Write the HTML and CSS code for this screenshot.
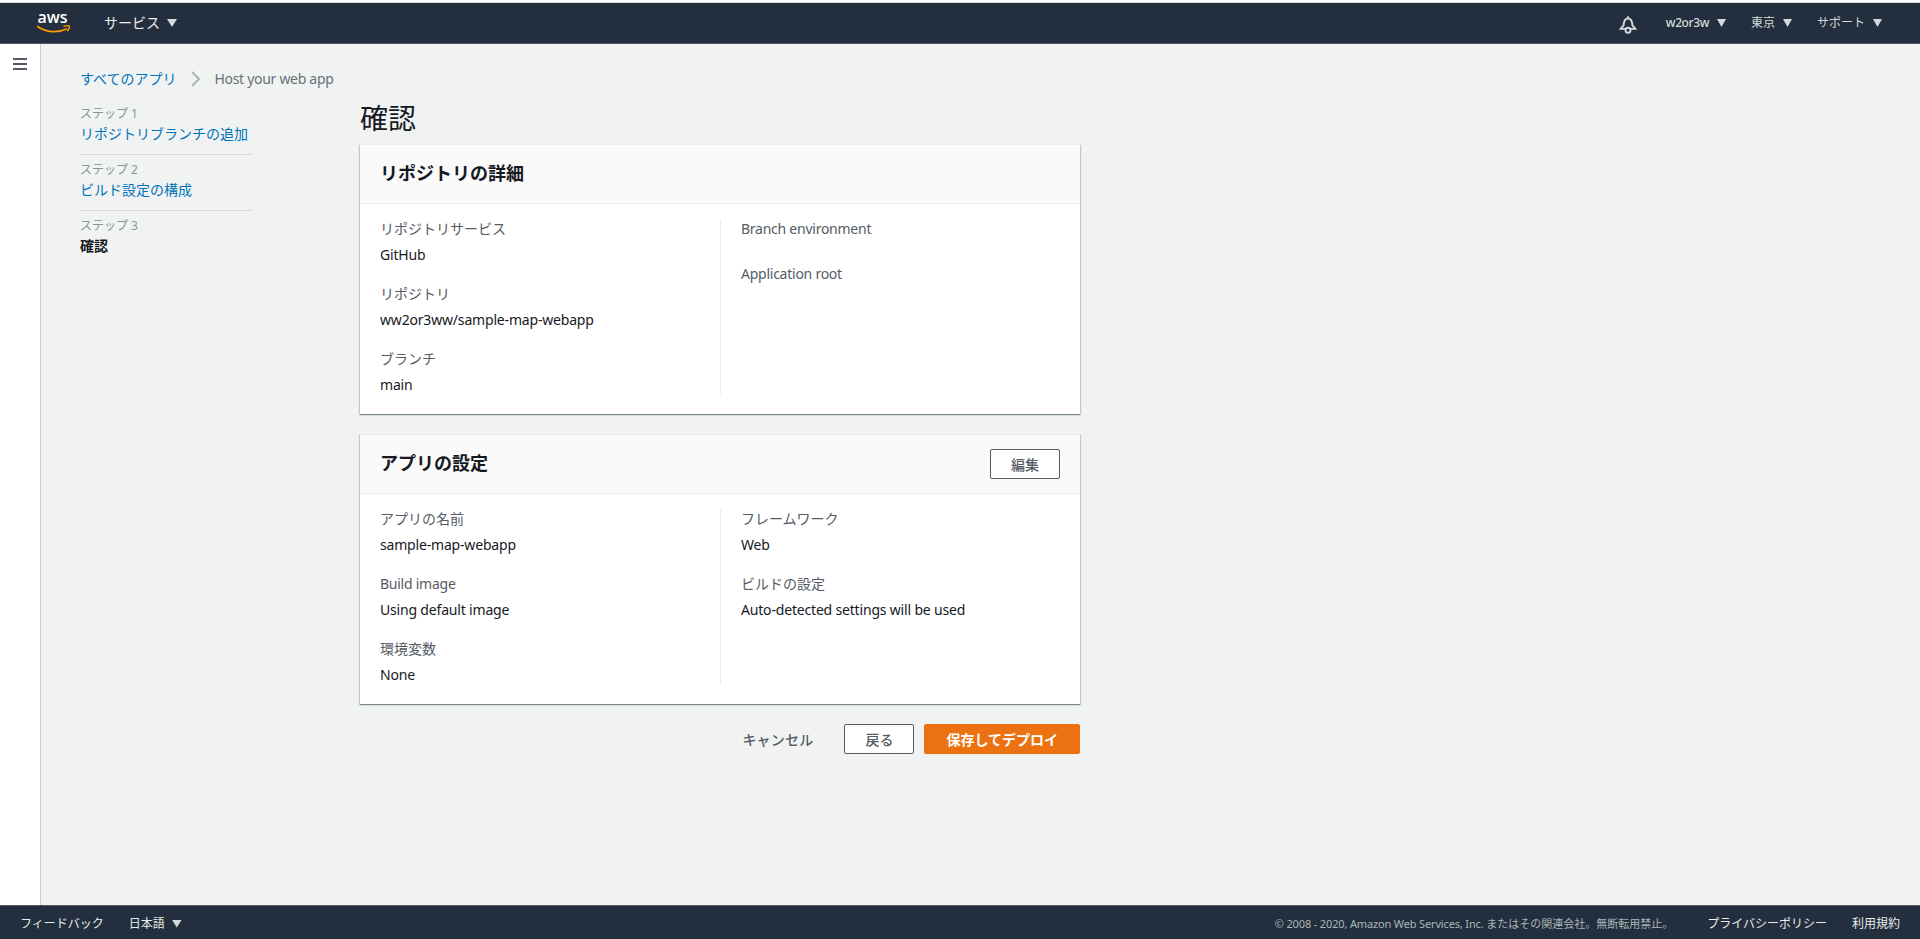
FILE: index.html
```html
<!DOCTYPE html>
<html lang="ja">

<head>
    <meta charset="UTF-8">
    <title>AWS Amplify Console</title>
    <link rel="stylesheet" href="styles.css">
</head>

<body>
    <header class="topbar">
        <svg class="logo" width="34" height="26" viewBox="0 0 34 26">
            <text x="0.5" y="13" textLength="30" lengthAdjust="spacingAndGlyphs">aws</text>
            <path d="M0.3 16.3 C9 22.8 21 23.2 30 18.8" fill="none" stroke="#ff9900" stroke-width="1.8" />
            <path d="M26.5 16.4 C29 15.4 31 15.4 32.4 16 C32.6 17.9 31.6 19.9 30.3 21.2" fill="none" stroke="#ff9900" stroke-width="1.4" />
        </svg>
        <a class="menu services">サービス<i class="arrow big"></i></a>
        <div class="account">
            <svg class="bell" width="18" height="18" viewBox="0 0 18 18" fill="none" stroke="#d5dbdb" stroke-width="1.9">
                <path d="M9 0.3V2.5M1.6 12.9H16.4L13.4 9.3C13.2 5.4 11.6 2.5 9 2.5S4.8 5.4 4.6 9.3Z" />
                <circle cx="9" cy="14.3" r="2.5" fill="#232f3e" />
            </svg>
            <a class="menu"><span class="user">w2or3w</span><i class="arrow"></i></a>
            <a class="menu">東京<i class="arrow"></i></a>
            <a class="menu">サポート<i class="arrow"></i></a>
        </div>
    </header>

    <div class="page">
        <nav class="sidebar">
            <div class="hamburger"><i></i><i></i><i></i></div>
        </nav>

        <main class="content">
            <div class="breadcrumb">
                <a class="link">すべてのアプリ</a>
                <svg width="10" height="16" viewBox="0 0 10 16" fill="none" stroke="#aab7b8" stroke-width="2">
                    <path d="M1 1L8 8L1 15" />
                </svg>
                <span class="current">Host your web app</span>
            </div>

            <div class="wizard">
                <ul class="steps">
                    <li>
                        <small>ステップ 1</small>
                        <a class="link">リポジトリブランチの追加</a>
                    </li>
                    <li>
                        <small>ステップ 2</small>
                        <a class="link">ビルド設定の構成</a>
                    </li>
                    <li>
                        <small>ステップ 3</small>
                        <b>確認</b>
                    </li>
                </ul>

                <div class="review">
                    <h1>確認</h1>

                    <section class="card">
                        <div class="card-header">
                            <h2>リポジトリの詳細</h2>
                        </div>
                        <div class="card-body">
                            <dl>
                                <dt>リポジトリサービス</dt>
                                <dd>GitHub</dd>
                                <dt>リポジトリ</dt>
                                <dd>ww2or3ww/sample-map-webapp</dd>
                                <dt>ブランチ</dt>
                                <dd>main</dd>
                            </dl>
                            <dl>
                                <dt class="latin">Branch environment</dt>
                                <dd></dd>
                                <dt class="latin">Application root</dt>
                                <dd></dd>
                            </dl>
                        </div>
                    </section>

                    <section class="card">
                        <div class="card-header">
                            <h2>アプリの設定</h2>
                            <button class="btn">編集</button>
                        </div>
                        <div class="card-body">
                            <dl>
                                <dt>アプリの名前</dt>
                                <dd>sample-map-webapp</dd>
                                <dt class="latin">Build image</dt>
                                <dd>Using default image</dd>
                                <dt>環境変数</dt>
                                <dd>None</dd>
                            </dl>
                            <dl>
                                <dt>フレームワーク</dt>
                                <dd>Web</dd>
                                <dt>ビルドの設定</dt>
                                <dd>Auto-detected settings will be used</dd>
                            </dl>
                        </div>
                    </section>

                    <div class="actions">
                        <button class="btn btn-link">キャンセル</button>
                        <button class="btn">戻る</button>
                        <button class="btn btn-primary">保存してデプロイ</button>
                    </div>
                </div>
            </div>
        </main>
    </div>

    <footer class="footer">
        <a>フィードバック</a>
        <a class="menu">日本語<i class="arrow big"></i></a>
        <span class="copyright"><span class="company">© 2008 - 2020, Amazon Web Services, Inc. </span>またはその関連会社。無断転用禁止。</span>
        <a>プライバシーポリシー</a>
        <a>利用規約</a>
    </footer>
</body>

</html>
```
FILE: styles.css
```css
* {
    box-sizing: border-box;
}

body {
    display: flex;
    flex-direction: column;
    height: 939px;
    margin: 0;
    overflow: hidden;
    font-family: "Noto Sans", "Noto Sans CJK JP", sans-serif;
    font-size: 14px;
    line-height: 20px;
    color: #16191f;
    background: #f1f3f3;
}

h1,
h2,
ul,
dl,
dd {
    margin: 0;
    padding: 0;
}

/* top bar */
.topbar {
    display: flex;
    align-items: center;
    flex: none;
    height: 44px;
    padding: 1px 38px 0 37px;
    border-top: 2px solid #fff;
    border-bottom: 1px solid #545b64;
    background: #232f3e;
    box-shadow: inset 0 1px #d5d8da;
    color: #d5dbdb;
}

.logo {
    margin-right: 33px;
    overflow: visible;
}

.logo text {
    font-family: "Open Sans", sans-serif;
    font-size: 16px;
    font-weight: 600;
    fill: #fff;
}

.menu {
    display: flex;
    align-items: center;
    gap: 8px;
}

.services {
    gap: 7px;
    color: #eaeded;
}

.arrow {
    width: 9px;
    height: 8px;
    background: #d5dbdb;
    clip-path: polygon(0 0, 100% 0, 50% 100%);
}

.arrow.big {
    width: 10px;
}

.account {
    display: flex;
    align-items: center;
    gap: 25px;
    margin-left: auto;
    font-size: 12px;
}

.bell {
    margin: 3px 4px 0 0;
}

.user {
    font-weight: 500;
    letter-spacing: -0.4px;
}

/* page */
.page {
    display: flex;
    flex: 1;
}

.sidebar {
    width: 41px;
    border-right: 1px solid #c7cdce;
    background: #fff;
}

.hamburger {
    display: grid;
    gap: 3px;
    padding: 14px 0 0 13px;
}

.hamburger i {
    width: 14px;
    height: 2px;
    background: #545b64;
}

.content {
    padding: 25px 0 0 39px;
}

.link {
    color: #0073bb;
}

.breadcrumb {
    display: flex;
    align-items: center;
    height: 20px;
}

.breadcrumb svg {
    margin: 0 13px 0 15px;
}

.current {
    color: #687078;
    letter-spacing: -0.3px;
}

.wizard {
    display: flex;
    padding-top: 15px;
}

.steps {
    width: 172px;
    margin-right: 108px;
    list-style: none;
}

.steps li {
    height: 51px;
    margin-bottom: 5px;
    border-bottom: 1px solid #d5dbdb;
}

.steps li:last-child {
    border-bottom: 0;
}

.steps small,
.steps b,
.steps .link {
    display: block;
}

.steps small {
    font-size: 12px;
    color: #879596;
}

.review {
    width: 720px;
}

h1 {
    height: 40px;
    font-size: 28px;
    font-weight: 400;
    line-height: 28px;
}

.card {
    height: 270px;
    margin-bottom: 20px;
    border-top: 1px solid #eaeded;
    background: #fff;
    box-shadow: 0 1px 1px 0 rgba(0, 28, 36, 0.3), 1px 1px 1px 0 rgba(0, 28, 36, 0.15), -1px 1px 1px 0 rgba(0, 28, 36, 0.15);
}

.card-header {
    display: flex;
    align-items: center;
    justify-content: space-between;
    height: 59px;
    padding: 0 20px;
    border-bottom: 1px solid #eaeded;
    background: #fafafa;
}

h2 {
    padding-bottom: 2px;
    font-size: 18px;
    line-height: 22px;
}

.card-body {
    display: grid;
    grid-template-columns: 1fr 1fr;
    padding-top: 15px;
}

dl {
    height: 175px;
    padding-left: 20px;
}

dl + dl {
    border-left: 1px solid #eaeded;
}

dt {
    margin-bottom: 6px;
    color: #545b64;
}

dd {
    padding-bottom: 19px;
    letter-spacing: -0.18px;
}

.latin {
    letter-spacing: -0.25px;
}

.btn {
    height: 30px;
    padding: 0 20px;
    border: 1px solid #545b64;
    border-radius: 2px;
    background: #fff;
    color: #545b64;
    font: 500 14px/20px "Noto Sans CJK JP", sans-serif;
    cursor: pointer;
}

.btn-link {
    border-color: transparent;
    background: transparent;
    letter-spacing: 0.2px;
}

.btn-primary {
    padding: 0 21px;
    border-color: #ec7211;
    background: #ec7211;
    color: #fff;
    font-weight: 700;
}

.actions {
    display: flex;
    justify-content: flex-end;
    gap: 10px;
}

/* footer */
.footer {
    display: flex;
    align-items: center;
    flex: none;
    gap: 25px;
    height: 34px;
    padding: 2px 20px 0;
    border-top: 1px solid #545b64;
    background: #232f3e;
    color: #eaeded;
    font-size: 12px;
}

.footer .menu {
    gap: 7px;
}

.copyright {
    margin: 0 9px 0 auto;
    color: #aab7b8;
    font-size: 11px;
}

.company {
    letter-spacing: -0.15px;
}
```
